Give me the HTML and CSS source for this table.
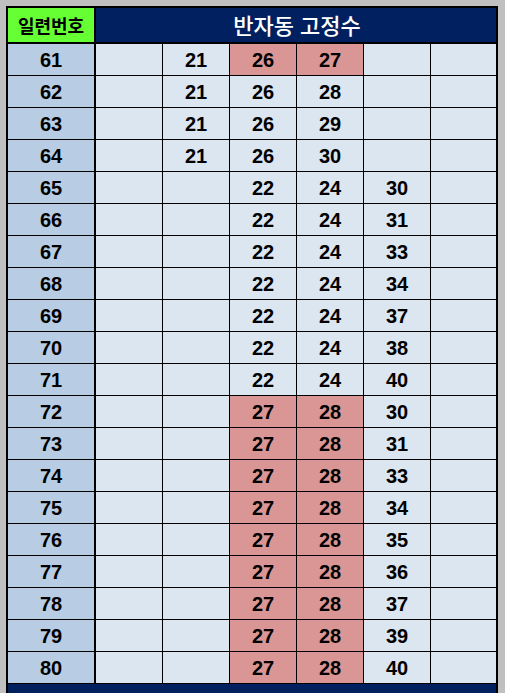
FILE: index.html
```html
<!DOCTYPE html>
<html lang="ko">
<head>
<meta charset="utf-8">
<title>반자동 고정수</title>
<link rel="stylesheet" href="styles.css">
</head>
<body>
<div class="sheet">
  <div class="hd-id">일련번호</div>
  <div class="hd-title">반자동 고정수</div>

  <div class="id">61</div><div class="c"></div><div class="c">21</div><div class="c r">26</div><div class="c r">27</div><div class="c"></div><div class="c"></div>
  <div class="id">62</div><div class="c"></div><div class="c">21</div><div class="c">26</div><div class="c">28</div><div class="c"></div><div class="c"></div>
  <div class="id">63</div><div class="c"></div><div class="c">21</div><div class="c">26</div><div class="c">29</div><div class="c"></div><div class="c"></div>
  <div class="id">64</div><div class="c"></div><div class="c">21</div><div class="c">26</div><div class="c">30</div><div class="c"></div><div class="c"></div>
  <div class="id">65</div><div class="c"></div><div class="c"></div><div class="c">22</div><div class="c">24</div><div class="c">30</div><div class="c"></div>
  <div class="id">66</div><div class="c"></div><div class="c"></div><div class="c">22</div><div class="c">24</div><div class="c">31</div><div class="c"></div>
  <div class="id">67</div><div class="c"></div><div class="c"></div><div class="c">22</div><div class="c">24</div><div class="c">33</div><div class="c"></div>
  <div class="id">68</div><div class="c"></div><div class="c"></div><div class="c">22</div><div class="c">24</div><div class="c">34</div><div class="c"></div>
  <div class="id">69</div><div class="c"></div><div class="c"></div><div class="c">22</div><div class="c">24</div><div class="c">37</div><div class="c"></div>
  <div class="id">70</div><div class="c"></div><div class="c"></div><div class="c">22</div><div class="c">24</div><div class="c">38</div><div class="c"></div>
  <div class="id">71</div><div class="c"></div><div class="c"></div><div class="c">22</div><div class="c">24</div><div class="c">40</div><div class="c"></div>
  <div class="id">72</div><div class="c"></div><div class="c"></div><div class="c r">27</div><div class="c r">28</div><div class="c">30</div><div class="c"></div>
  <div class="id">73</div><div class="c"></div><div class="c"></div><div class="c r">27</div><div class="c r">28</div><div class="c">31</div><div class="c"></div>
  <div class="id">74</div><div class="c"></div><div class="c"></div><div class="c r">27</div><div class="c r">28</div><div class="c">33</div><div class="c"></div>
  <div class="id">75</div><div class="c"></div><div class="c"></div><div class="c r">27</div><div class="c r">28</div><div class="c">34</div><div class="c"></div>
  <div class="id">76</div><div class="c"></div><div class="c"></div><div class="c r">27</div><div class="c r">28</div><div class="c">35</div><div class="c"></div>
  <div class="id">77</div><div class="c"></div><div class="c"></div><div class="c r">27</div><div class="c r">28</div><div class="c">36</div><div class="c"></div>
  <div class="id">78</div><div class="c"></div><div class="c"></div><div class="c r">27</div><div class="c r">28</div><div class="c">37</div><div class="c"></div>
  <div class="id">79</div><div class="c"></div><div class="c"></div><div class="c r">27</div><div class="c r">28</div><div class="c">39</div><div class="c"></div>
  <div class="id">80</div><div class="c"></div><div class="c"></div><div class="c r">27</div><div class="c r">28</div><div class="c">40</div><div class="c"></div>

  <div class="ft"></div>
</div>
</body>
</html>
```

FILE: styles.css
```css
html, body {
  margin: 0;
  padding: 0;
  height: 693px;
  overflow: hidden;
  background: #c0c0c0;
}

.sheet {
  margin: 6px 0 0 6px;
  width: 488px;
  border: 2px solid #000;
  background: #000;
  display: grid;
  grid-template-columns: 87px 66px 66px 66px 66px 66px 65px;
  grid-template-rows: 35px repeat(20, 31px) 40px;
  gap: 1px;
  font-family: "Liberation Sans", Arial, "Noto Sans CJK KR", sans-serif;
}

.sheet > div {
  box-sizing: border-box;
  display: flex;
  align-items: center;
  justify-content: center;
}

.hd-id {
  background: #66ff33;
  border-right: 1px solid #000;
  border-bottom: 1px solid #000;
  color: #000;
  font-family: "Noto Sans CJK KR", sans-serif;
  font-weight: 700;
  font-size: 18px;
  padding-bottom: 1px;
}

.hd-title {
  grid-column: span 6;
  background: #002060;
  border-bottom: 1px solid #000;
  color: #fff;
  font-family: "Noto Sans CJK KR", sans-serif;
  font-weight: 500;
  font-size: 22px;
  padding-bottom: 2px;
  padding-left: 2px;
}

.id {
  background: #b8cce4;
  border-right: 1px solid #000;
  font-weight: 700;
  font-size: 20px;
  color: #000;
  padding-top: 1px;
}

.c {
  background: #dce6f1;
  font-weight: 700;
  font-size: 20px;
  color: #000;
  padding-top: 1px;
}

.c.r {
  background: #da9694;
}

.ft {
  grid-column: span 7;
  background: #002060;
}
```
